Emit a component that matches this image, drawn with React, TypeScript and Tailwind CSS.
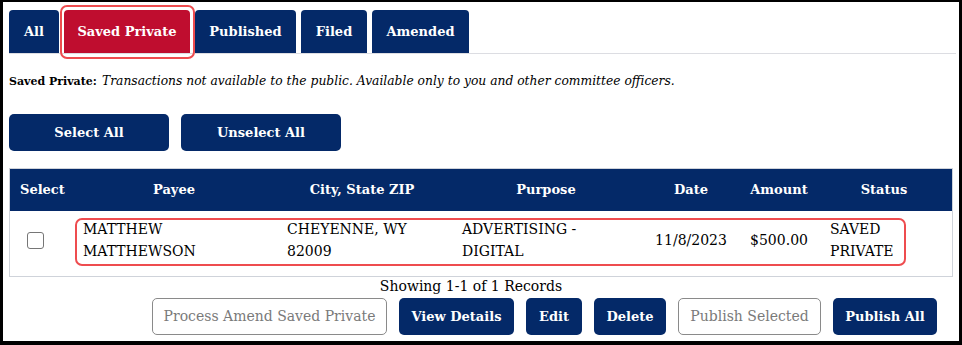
import { useState } from "react";

const tabs = [
  { label: "All", w: "w-[50px]" },
  { label: "Saved Private", w: "w-[126px]" },
  { label: "Published", w: "w-[101px]" },
  { label: "Filed", w: "w-[66px]" },
  { label: "Amended", w: "w-[97px]" },
];

const navyBtn =
  "h-[37px] rounded-[5px] bg-[#042968] text-white font-bold text-[13px] flex items-center justify-center";
const ghostBtn =
  "h-[37px] rounded-[5px] border border-[#8a8a8a] bg-white text-[#7a7a7a] text-[14px] flex items-center justify-center";

export default function App() {
  const [active] = useState("Saved Private");
  const [checked, setChecked] = useState(false);

  return (
    <div
      className="relative w-[962px] h-[345px] overflow-hidden bg-white border-black border-t-[2px] border-l-[3px] border-r-[3px] border-b-[4px] text-black"
      style={{ fontFamily: '"DejaVu Serif", Georgia, serif' }}
    >
      {/* Tabs */}
      <div className="mt-[8px] ml-[6px] mr-[3px] flex gap-[5px] border-b border-[#dcdde2] h-[44px]">
        {tabs.map((t) => (
          <div
            key={t.label}
            className={
              t.w +
              " h-[43px] rounded-t-[4px] text-white font-bold text-[13px] flex items-center justify-center " +
              (t.label === active ? "bg-[#bf0d2f]" : "bg-[#042968]")
            }
          >
            {t.label}
          </div>
        ))}
      </div>

      {/* description */}
      <p className="ml-[6px] mt-[18px] leading-[16px]">
        <span className="font-bold text-[11px]">Saved Private:</span>{" "}
        <span className="italic text-[12.3px]">
          Transactions not available to the public. Available only to you and other committee officers.
        </span>
      </p>

      {/* select buttons */}
      <div className="ml-[6px] mt-[24px] flex gap-[12px]">
        <button type="button" className={navyBtn + " w-[160px]"}>
          Select All
        </button>
        <button type="button" className={navyBtn + " w-[160px]"}>
          Unselect All
        </button>
      </div>

      {/* table */}
      <div className="ml-[6px] mt-[17px] w-[944px] border border-[#cfd3da]">
        <div className="h-[42px] bg-[#042968] text-white font-bold text-[13px] flex items-center">
          <div className="w-[66px] pl-[10px]">Select</div>
          <div className="w-[196px] text-center">Payee</div>
          <div className="w-[180px] text-center">City, State ZIP</div>
          <div className="w-[188px] text-center">Purpose</div>
          <div className="w-[102px] text-center">Date</div>
          <div className="w-[74px] text-center">Amount</div>
          <div className="flex-1 text-center">Status</div>
        </div>
        <div className="h-[65px] pb-[8px] flex items-center text-[14px] leading-[22px]">
          <div className="w-[66px] pl-[17px] pt-[1px] flex items-center">
            <input
              type="checkbox"
              checked={checked}
              onChange={(e) => setChecked(e.target.checked)}
              className="w-[17px] h-[17px] appearance-none rounded-[3px] border border-[#767676] bg-white"
            />
          </div>
          <div className="w-[196px] pl-[7px]">
            MATTHEW
            <br />
            MATTHEWSON
          </div>
          <div className="w-[180px] pl-[15px]">
            CHEYENNE, WY
            <br />
            82009
          </div>
          <div className="w-[188px] pl-[10px]">
            ADVERTISING -
            <br />
            DIGITAL
          </div>
          <div className="w-[102px] text-center">11/8/2023</div>
          <div className="w-[74px] text-center">$500.00</div>
          <div className="flex-1 pl-[14px]">
            SAVED
            <br />
            PRIVATE
          </div>
        </div>
      </div>

      <p className="text-center text-[14px] leading-[18px] mt-0 ml-[6px] w-[924px]">
        Showing 1-1 of 1 Records
      </p>

      {/* actions */}
      <div className="mt-[3px] flex justify-end gap-[12px] pr-[22px]">
        <button type="button" className={ghostBtn + " w-[235px]"}>
          Process Amend Saved Private
        </button>
        <button type="button" className={navyBtn + " w-[115px]"}>
          View Details
        </button>
        <button type="button" className={navyBtn + " w-[56px]"}>
          Edit
        </button>
        <button type="button" className={navyBtn + " w-[72px]"}>
          Delete
        </button>
        <button type="button" className={ghostBtn + " w-[143px]"}>
          Publish Selected
        </button>
        <button type="button" className={navyBtn + " w-[104px]"}>
          Publish All
        </button>
      </div>

      {/* annotation outlines */}
      <div className="absolute left-[57px] top-[3px] w-[135px] h-[54px] rounded-[7px] border-2 border-[#ee4c4f] pointer-events-none" />
      <div className="absolute left-[72px] top-[216px] w-[831px] h-[48px] rounded-[7px] border-2 border-[#ee4c4f] pointer-events-none" />
    </div>
  );
}
